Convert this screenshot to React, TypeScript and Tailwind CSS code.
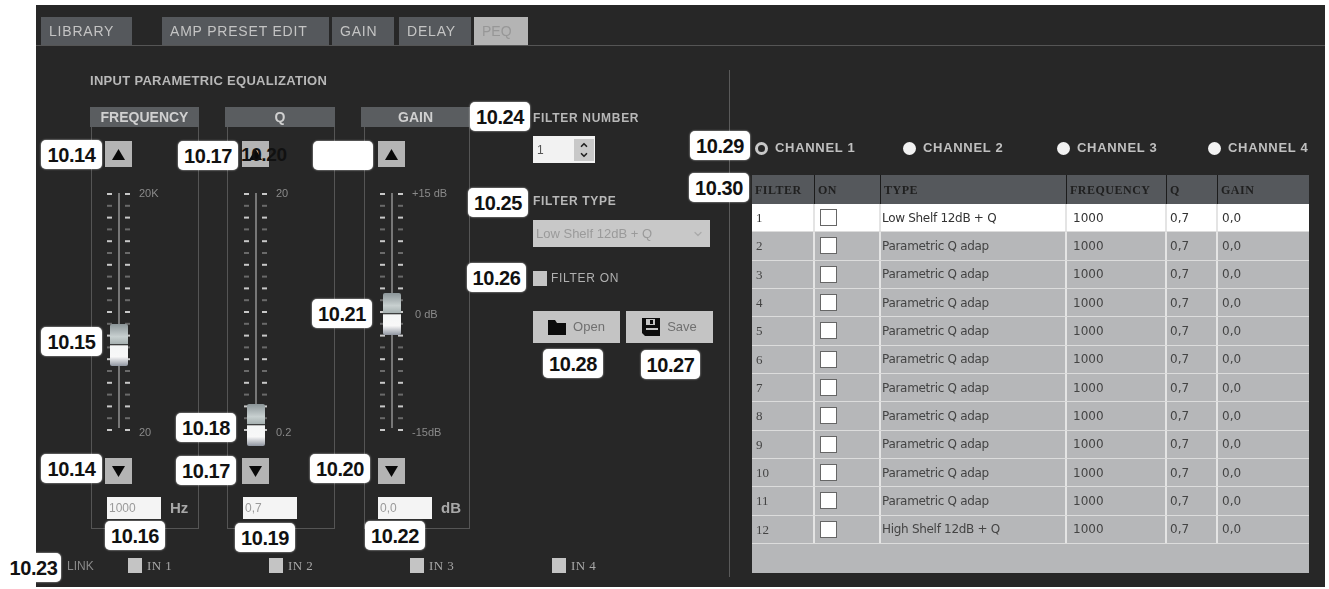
import { ChevronDown, ChevronUp } from "lucide-react"

const tabs = [
  { label: "LIBRARY", width: "w-[91px]", gap: "mr-[30px]" },
  { label: "AMP PRESET EDIT", width: "w-[167px]", gap: "mr-[3px]" },
  { label: "GAIN", width: "w-[62px]", gap: "mr-[5px]" },
  { label: "DELAY", width: "w-[72px]", gap: "mr-[3px]" },
]

const callouts = [
  { label: "10.14", box: "left-[41px] top-[140px] w-[61px]" },
  { label: "10.17", box: "left-[178px] top-[141px] w-[60px]" },
  { label: "", box: "left-[313px] top-[141px] w-[60px]" },
  { label: "10.24", box: "left-[470px] top-[102px] w-[60px]" },
  { label: "10.25", box: "left-[468px] top-[188px] w-[60px]" },
  { label: "10.26", box: "left-[467px] top-[263px] w-[59px]" },
  { label: "10.28", box: "left-[543px] top-[349px] w-[60px]" },
  { label: "10.27", box: "left-[641px] top-[350px] w-[59px]" },
  { label: "10.29", box: "left-[690px] top-[131px] w-[60px]" },
  { label: "10.30", box: "left-[689px] top-[173px] w-[60px]" },
  { label: "10.15", box: "left-[41px] top-[327px] w-[61px]" },
  { label: "10.14", box: "left-[41px] top-[454px] w-[61px]" },
  { label: "10.17", box: "left-[176px] top-[456px] w-[60px]" },
  { label: "10.18", box: "left-[176px] top-[413px] w-[60px]" },
  { label: "10.21", box: "left-[312px] top-[299px] w-[60px]" },
  { label: "10.20", box: "left-[310px] top-[454px] w-[60px]" },
  { label: "10.16", box: "left-[105px] top-[521px] w-[60px]" },
  { label: "10.19", box: "left-[235px] top-[523px] w-[60px]" },
  { label: "10.22", box: "left-[365px] top-[521px] w-[60px]" },
  { label: "10.23", box: "left-[6px] top-[553px] w-[55px]" },
]

const strips = [
  { title: "FREQUENCY", top: "20K", bottom: "20", mid: "", thumb: 131, value: "1000", unit: "Hz", width: "w-[109px]", box: "ml-[1px]", btn: "ml-[13px]", slider: "ml-[15px]", input: "ml-[15px]" },
  { title: "Q", top: "20", bottom: "0.2", mid: "", thumb: 211, value: "0,7", unit: "", width: "w-[110px]", box: "ml-[2px]", btn: "ml-[14px]", slider: "ml-[16px]", input: "ml-[15px]" },
  { title: "GAIN", top: "+15 dB", bottom: "-15dB", mid: "0 dB", thumb: 100, value: "0,0", unit: "dB", width: "w-[109px]", box: "ml-[3px]", btn: "ml-[13px]", slider: "ml-[15px]", input: "ml-[13px]" },
]

const rows = Array.from({ length: 12 }, (_, i) => ({
  n: i + 1,
  type: i === 0 ? "Low Shelf 12dB + Q" : i === 11 ? "High Shelf 12dB + Q" : "Parametric Q adap",
}))

const cols = "grid grid-cols-[63px_66px_186px_100px_51px_1fr]"

function TickScale() {
  return (
    <svg width="26" height="238" viewBox="0 0 26 238" className="block">
      {Array.from({ length: 21 }, (_, i) => (
        <g key={i} fill={i % 2 === 0 ? "#c8c8c8" : "#6a6a6a"}>
          <rect x="0" y={i * 11.8} width="5" height="2" />
          <rect x="18" y={i * 11.8} width="5" height="2" />
        </g>
      ))}
      <rect x="11.5" y="0" width="1" height="235" fill="#c8c8c8" />
    </svg>
  )
}

function ArrowButton({ down }: { down?: boolean }) {
  return (
    <div className="flex h-[26px] w-[27px] items-center justify-center bg-[#b4b4b4]">
      <svg width="13" height="11" viewBox="0 0 13 11">
        <path d={down ? "M0 0H13L6.5 11Z" : "M6.5 0L13 11H0Z"} fill="#0a0a0a" />
      </svg>
    </div>
  )
}

function Strip({ s }: { s: (typeof strips)[number] }) {
  return (
    <div className={`${s.width} shrink-0`}>
      <div className="flex h-[20px] items-center justify-center bg-[#5a5d60] text-[14px] font-bold text-[#d0d0d0]">
        {s.title}
      </div>
      <div className={`${s.box} relative h-[402px] border-x border-b border-[#555] pt-[14px]`}>
        <div className={s.btn}>
          <ArrowButton />
        </div>
        <div className={`${s.slider} relative mt-[26px] flex h-[238px]`}>
          <TickScale />
          <span className="ml-[6px] mt-[-5px] text-[11px] leading-none text-[#8a8a8a]">{s.top}</span>
          {s.mid && (
            <span className="absolute left-[35px] top-[116px] text-[11px] leading-none text-[#8a8a8a]">{s.mid}</span>
          )}
          <span className="absolute bottom-[-7px] left-[32px] text-[11px] leading-none text-[#8a8a8a]">{s.bottom}</span>
          <div
            className="absolute left-[3px] h-[42px] w-[18px] rounded-[2px] bg-[linear-gradient(#8b9598,#c8d0d0_30%,#a5b0b0_48%,#222_49%,#f4f6f6_52%,#f8f8f8_78%,#8f95a0)]"
            style={{ top: s.thumb }}
          />
        </div>
        <div className={`${s.btn} mt-[27px]`}>
          <ArrowButton down />
        </div>
        <div className="mt-[13px] flex items-center">
          <div className={`${s.input} flex h-[22px] w-[54px] items-center bg-[#f4f4f4] pl-[2px] text-[12px] text-[#9a9a9a]`}>
            {s.value}
          </div>
          <span className="ml-[9px] text-[15px] font-bold text-[#a8a8a8]">{s.unit}</span>
        </div>
      </div>
    </div>
  )
}

function Check({ label, className = "" }: { label: string; className?: string }) {
  return (
    <div className={`flex items-center ${className}`}>
      <span className="h-[15px] w-[14px] bg-[#c4c4c4]" />
      <span className="ml-[5px] font-['Liberation_Serif'] text-[13px] tracking-[0.4px] text-[#a8a8a8]">{label}</span>
    </div>
  )
}

function Radio({ label, on, className = "" }: { label: string; on?: boolean; className?: string }) {
  return (
    <div className={`flex items-center ${className}`}>
      <span className={`h-[13px] w-[13px] rounded-full ${on ? "border-[3px] border-[#c8c8c8]" : "bg-[#f2f2f2]"}`} />
      <span className="ml-[7px] text-[13px] font-bold tracking-[0.7px] text-[#c0c0c0]">{label}</span>
    </div>
  )
}

export default function App() {
  return (
    <div className="relative h-[589px] w-[1329px] overflow-hidden bg-white pt-[5px] font-['Liberation_Sans',sans-serif]">
      <div className="ml-[36px] h-[582px] w-[1289px] bg-[#272727] pt-[12px] blur-[0.6px]">
        {/* Tabs */}
        <div className="flex h-[29px] border-b border-[#555] pl-[5px]">
          {tabs.map(t => (
            <div
              key={t.label}
              className={`${t.width} ${t.gap} flex h-[28px] items-center bg-[#55585c] pl-[8px] text-[14px] tracking-[0.8px] text-[#c4c4c4]`}
            >
              {t.label}
            </div>
          ))}
          <div className="flex h-[28px] w-[54px] items-center bg-[#b4b4b4] pl-[8px] text-[14px] text-[#979797]">
            PEQ
          </div>
        </div>

        <div className="flex">
          {/* Left side */}
          <div className="h-[531px] w-[693px] pl-[54px] pt-[29px]">
            <div className="text-[13px] font-bold leading-[12px] tracking-[0.3px] text-[#b8b8b8]">
              INPUT PARAMETRIC EQUALIZATION
            </div>
            <div className="mt-[20px] flex">
              <div className="flex gap-[26px]">
                {strips.map(s => (
                  <Strip key={s.title} s={s} />
                ))}
              </div>
              <div className="ml-[63px] w-[180px] pt-[5px]">
                <div className="text-[12px] font-bold leading-[12px] tracking-[0.7px] text-[#b8b8b8]">FILTER NUMBER</div>
                <div className="mt-[12px] flex h-[27px] w-[62px] items-center justify-between bg-[#f2f2f2] pl-[4px] pr-[1px] text-[12px] text-[#555]">
                  1
                  <div className="flex h-[22px] w-[20px] flex-col items-center justify-center bg-[#c8c8c8] text-[#222]">
                    <ChevronUp size={10} strokeWidth={4} />
                    <ChevronDown size={10} strokeWidth={4} />
                  </div>
                </div>
                <div className="mt-[32px] text-[12px] font-bold leading-[12px] tracking-[0.7px] text-[#b8b8b8]">FILTER TYPE</div>
                <div className="mt-[13px] flex h-[27px] w-[177px] items-center justify-between bg-[#c8c8c8] pl-[3px] pr-[6px] text-[13px] text-[#9a9a9a]">
                  Low Shelf 12dB + Q
                  <ChevronDown size={12} strokeWidth={2.5} className="text-[#aaa]" />
                </div>
                <div className="mt-[22px] flex items-center">
                  <span className="h-[15px] w-[14px] bg-[#c4c4c4]" />
                  <span className="ml-[4px] text-[12px] tracking-[0.7px] text-[#b0b0b0]">FILTER ON</span>
                </div>
                <div className="mt-[24px] flex gap-[6px]">
                  <div className="flex h-[32px] w-[87px] items-center justify-center gap-[7px] bg-[#c4c4c4] text-[13px] text-[#707070]">
                    <svg width="18" height="15" viewBox="0 0 18 15">
                      <path d="M0 0H7L9 3H18V15H0Z" fill="#0c0c0c" />
                    </svg>
                    Open
                  </div>
                  <div className="flex h-[32px] w-[87px] items-center justify-center gap-[7px] bg-[#c4c4c4] text-[13px] text-[#707070]">
                    <svg width="18" height="18" viewBox="0 0 18 18">
                      <path d="M0 0H18V18H3L0 15Z" fill="#0c0c0c" />
                      <rect x="4" y="1" width="9" height="6" fill="#c4c4c4" />
                      <rect x="8" y="2" width="3" height="4" fill="#0c0c0c" />
                      <rect x="4" y="10" width="12" height="2" fill="#c4c4c4" />
                    </svg>
                    Save
                  </div>
                </div>
              </div>
            </div>
            {/* Link row */}
            <div className="ml-[-23px] mt-[27px] flex items-center">
              <span className="w-[61px] text-[12px] text-[#8a8a8a]">LINK</span>
              <Check label="IN 1" className="w-[141px]" />
              <Check label="IN 2" className="w-[141px]" />
              <Check label="IN 3" className="w-[142px]" />
              <Check label="IN 4" />
            </div>
          </div>

          {/* Right side */}
          <div className="mt-[24px] h-[507px] w-[1px] bg-[#5a5a5a]" />
          <div className="w-[581px] pl-[22px] pt-[95px]">
            <div className="flex h-[14px] items-center">
              <Radio label="CHANNEL 1" on className="ml-[3px] w-[148px]" />
              <Radio label="CHANNEL 2" className="w-[154px]" />
              <Radio label="CHANNEL 3" className="w-[151px]" />
              <Radio label="CHANNEL 4" />
            </div>
            <div className="mt-[20px] w-[557px] bg-[#b6b7b9]">
              <div className={`${cols} h-[29px] bg-[#55585c] font-['Liberation_Serif'] text-[12px] font-bold tracking-[0.5px] text-[#202020]`}>
                {["FILTER", "ON", "TYPE", "FREQUENCY", "Q", "GAIN"].map((h, i) => (
                  <div key={h} className={`flex items-center pl-[3px] ${i < 5 ? "border-r border-[#1c1c1c]" : ""}`}>
                    {h}
                  </div>
                ))}
              </div>
              <div className="h-[369px]">
                {rows.map(r => (
                  <div
                    key={r.n}
                    className={`${cols} h-[28.33px] border-b border-[#dcdcdc] font-['DejaVu_Sans'] text-[12px] ${r.n === 1 ? "bg-white text-[#333]" : "text-[#444]"}`}
                  >
                    <div className="flex items-center border-r-2 border-[#e4e4e4] pl-[4px] font-['Liberation_Serif'] text-[13px]">{r.n}</div>
                    <div className="flex items-center border-r-2 border-[#e4e4e4] pl-[5px]">
                      <span className="h-[17px] w-[17px] border border-[#666] bg-white" />
                    </div>
                    <div className="flex items-center whitespace-nowrap border-r-2 border-[#e4e4e4] pl-[1px] tracking-[-0.3px]">{r.type}</div>
                    <div className="flex items-center border-r-2 border-[#e4e4e4] pl-[6px]">1000</div>
                    <div className="flex items-center border-r-2 border-[#e4e4e4] pl-[3px]">0,7</div>
                    <div className="flex items-center pl-[4px]">0,0</div>
                  </div>
                ))}
              </div>
            </div>
          </div>
        </div>
      </div>

      {/* Callout labels sit over the screenshot */}
      {callouts.map((c, i) => (
        <div
          key={i}
          className={`${c.box} absolute flex h-[29px] items-center justify-center rounded-[5px] bg-white text-[20px] font-bold tracking-[-0.4px] text-[#111] shadow-[0_0_2px_rgba(255,255,255,0.8)]`}
        >
          {c.label}
        </div>
      ))}
      <div className="absolute left-[241px] top-[141px] flex h-[29px] items-center text-[19px] font-bold tracking-[-0.4px] text-[#111]">
        10.20
      </div>
    </div>
  )
}
